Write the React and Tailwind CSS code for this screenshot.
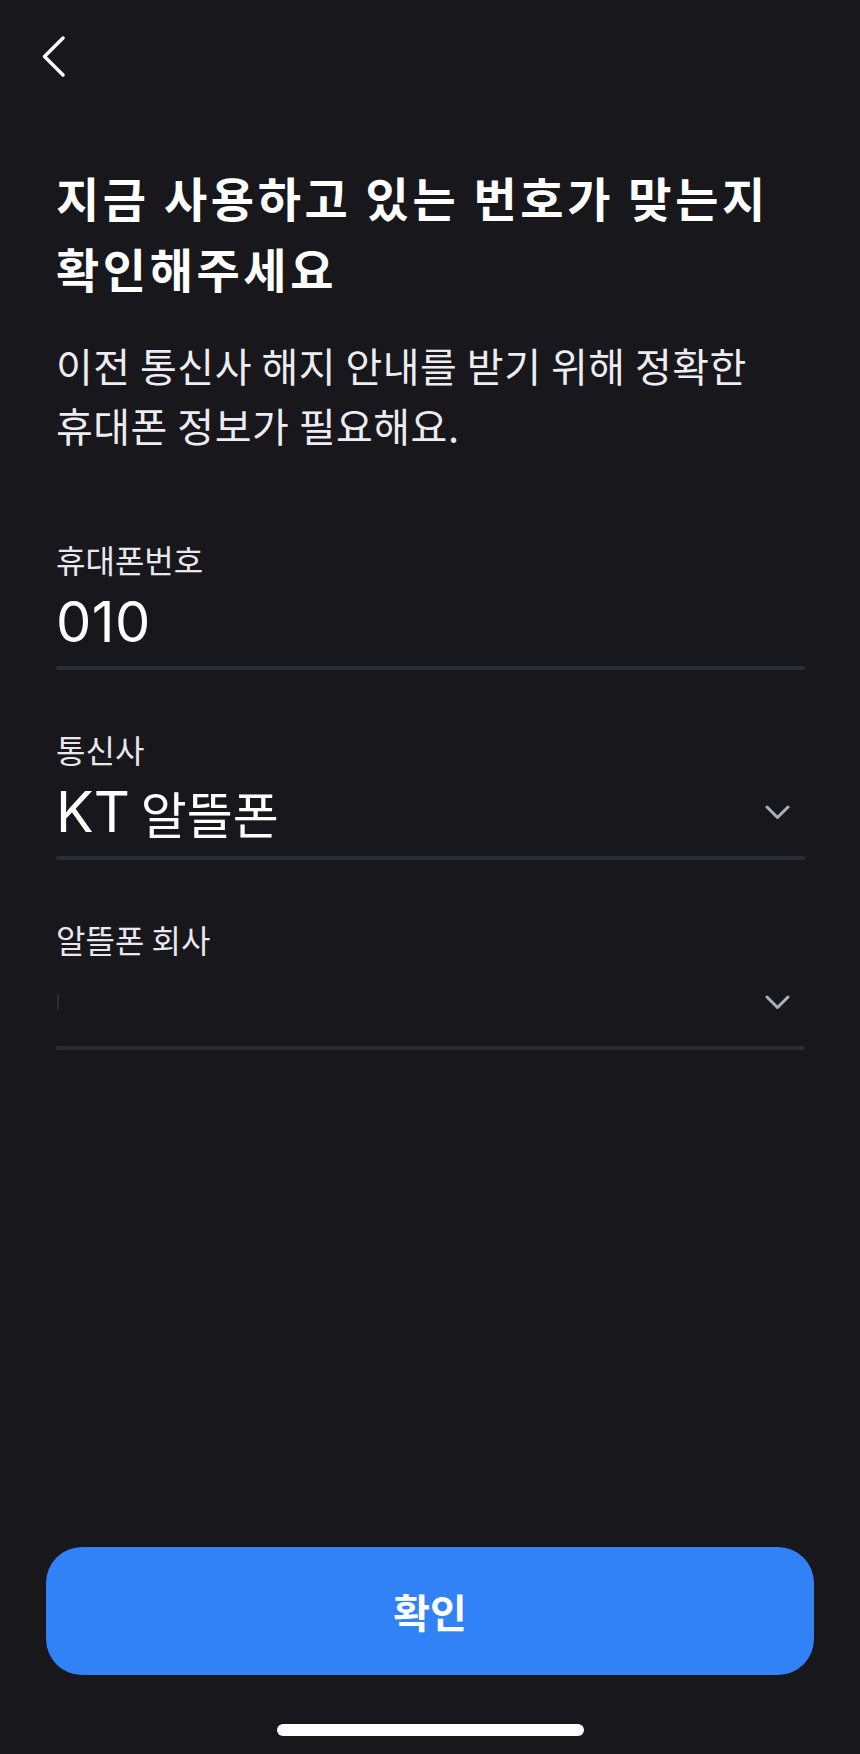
import React from 'react';

const ChevronDown = () => (
  <svg width="25" height="15" viewBox="0 0 25 15" fill="none">
    <path d="M2 2L12.5 12.5L23 2" stroke="#b0b0b8" strokeWidth="3" strokeLinecap="round" strokeLinejoin="round" />
  </svg>
);

const Field = ({ label, children, select, caret }) => (
  <div className="flex flex-col">
    <div className="h-[40px] flex items-center text-[32px] text-[#e8e8ee]">{label}</div>
    <div className="mt-[13px] h-[60px] flex items-center justify-between pr-[15px]">
      {children ? (
        <span className="flex items-center text-white leading-[60px]">{children}</span>
      ) : (
        <span className={caret ? 'w-[2px] h-[16px] bg-[#2c2c33] ml-[1px]' : ''}></span>
      )}
      {select && <ChevronDown />}
    </div>
    <div className="mt-[14px] h-[4px] rounded-full bg-[#2c2c34]"></div>
  </div>
);

export default function App() {
  return (
    <div className="min-h-[1754px] w-full bg-[#17171c] flex flex-col font-['Noto_Sans_CJK_KR',sans-serif]">
      {/* Header */}
      <div className="h-[112px] flex items-center pl-[42px]">
        <svg width="24" height="41" viewBox="0 0 24 41" fill="none">
          <path d="M21 2L2.5 20.5L21 39" stroke="#ffffff" strokeWidth="3.4" strokeLinecap="round" strokeLinejoin="round" />
        </svg>
      </div>

      <div className="pl-[56px] pr-[55px]">
        <h1 className="mt-[49px] text-[47px] leading-[71px] font-bold text-white tracking-[3.6px] whitespace-nowrap">
          지금 사용하고 있는 번호가 맞는지
          <br />
          확인해주세요
        </h1>
        <p className="mt-[32px] text-[40px] leading-[60px] text-[#ececf1] tracking-[0.5px] whitespace-nowrap">
          이전 통신사 해지 안내를 받기 위해 정확한
          <br />
          휴대폰 정보가 필요해요.
        </p>

        <div className="mt-[84px] flex flex-col gap-[59px]">
          <Field label="휴대폰번호">
            <span className="font-['Inter',sans-serif] text-[56px] tracking-[0.5px]">010</span>
          </Field>
          <Field label="통신사" select>
            <span className="font-['Inter',sans-serif] text-[56px]">KT</span>
            <span className="ml-[11px] text-[50px]">알뜰폰</span>
          </Field>
          <Field label="알뜰폰 회사" select caret />
        </div>
      </div>

      <div className="flex-1"></div>

      <div className="px-[46px]">
        <button className="w-full h-[128px] rounded-[36px] bg-[#3182f6] text-white text-[40px] font-semibold">
          확인
        </button>
      </div>

      <div className="mt-[49px] mb-[18px] flex justify-center">
        <div className="w-[307px] h-[12px] rounded-full bg-white"></div>
      </div>
    </div>
  );
}
